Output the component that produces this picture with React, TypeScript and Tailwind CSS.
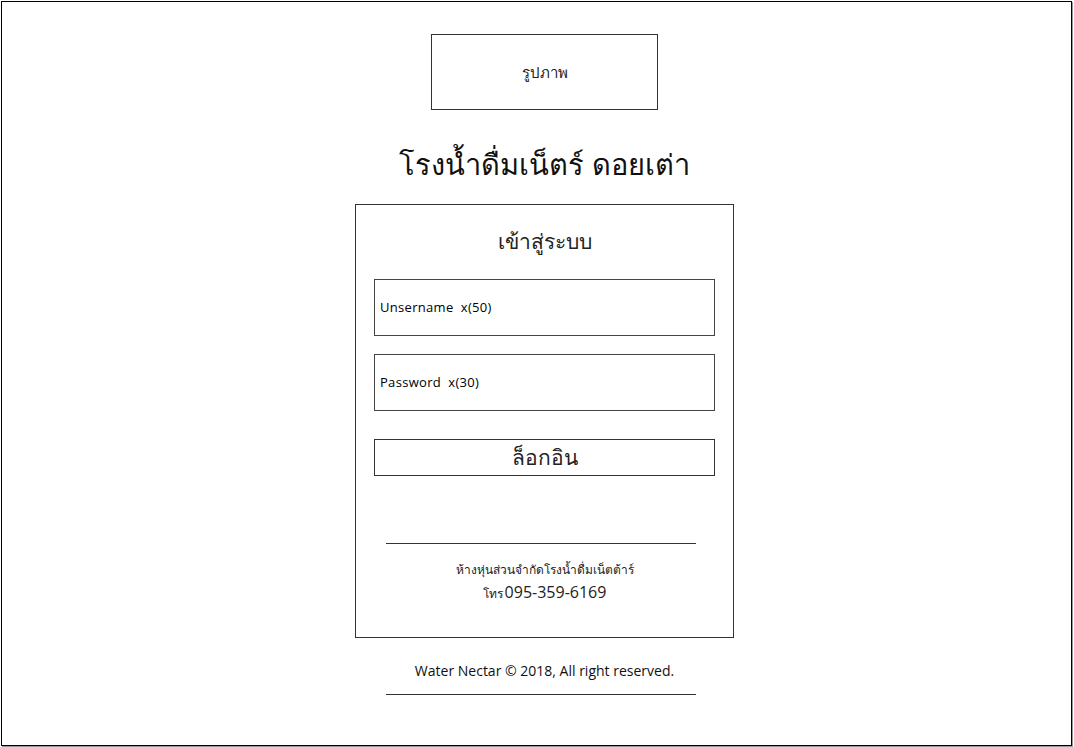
import React from "react";

export default function App() {
  return (
    <div className="w-[1074px] h-[747px] bg-white p-px font-['Open_Sans',sans-serif] text-black">
      <div className="w-[1071px] h-[745px] border border-black shadow-[1px_1px_0_#999] flex flex-col items-center pl-[16px]">
        <div className="mt-[32px] w-[227px] h-[76px] border border-[#333] flex items-center justify-center text-[15px] text-[#222]">
          รูปภาพ
        </div>
        <h1 className="mt-[34px] text-[29px] leading-[40px] font-light text-[#111]">
          โรงน้ำดื่มเน็ตร์ ดอยเต่า
        </h1>
        <div className="mt-[20px] w-[379px] h-[434px] border border-[#333] flex flex-col items-center">
          <h2 className="mt-[21px] text-[21px] leading-[30px] font-light text-[#222]">
            เข้าสู่ระบบ
          </h2>
          <div className="mt-[23px] w-[341px] flex flex-col gap-[18px]">
            <div className="h-[57px] border border-[#444] flex items-center px-[5px] text-[13px] tracking-[0.3px]">
              Unsername&nbsp; x(50)
            </div>
            <div className="h-[57px] border border-[#444] flex items-center px-[5px] text-[13px] tracking-[0.3px]">
              Password&nbsp; x(30)
            </div>
          </div>
          <button className="mt-[28px] w-[341px] h-[37px] border border-[#333] flex items-center justify-center text-[21px] font-light text-[#222]">
            ล็อกอิน
          </button>
          <div className="mt-[67px] mr-[7px] w-[310px] border-t border-[#333]" />
          <p className="mt-[18px] text-[12px] leading-[16px] text-[#222]">
            ห้างหุ่นส่วนจำกัดโรงน้ำดื่มเน็ตต้าร์
          </p>
          <p className="mt-[4px] text-[16px] leading-[20px] text-[#222]">
            <span className="text-[12px] mr-[2px]">โทร</span>095-359-6169
          </p>
        </div>
        <p className="mt-[23px] text-[14px] leading-[20px] text-[#111]">
          Water Nectar © 2018, All right reserved.
        </p>
        <div className="mt-[13px] mr-[7px] w-[310px] border-t border-[#333]" />
      </div>
    </div>
  );
}
